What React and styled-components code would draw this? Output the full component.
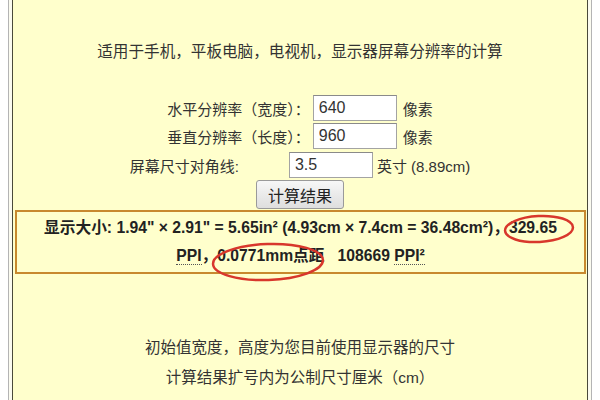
import React from "react";
import styled, { createGlobalStyle } from "styled-components";

const Global = createGlobalStyle`
  html, body { margin: 0; padding: 0; background: #ffffff; }
  body { font-family: "Liberation Sans", "Noto Sans CJK SC", sans-serif; }
  * { box-sizing: border-box; }
`;

const Root = styled.div`
  position: relative;
  width: 600px;
  height: 400px;
  overflow: hidden;
  padding: 0 8px;
`;

const Frame = styled.div`
  height: 100%;
  border-left: 1px solid #b4b4b4;
  border-right: 1px solid #b4b4b4;
  padding: 0 3px;
  background: #fbfbf0;
`;

const Panel = styled.div`
  height: 100%;
  border-left: 1px solid #4a4a3a;
  border-right: 1px solid #4a4a3a;
  background: #ffffcc;
  display: flex;
  flex-direction: column;
  align-items: stretch;
  color: #333;
`;

const Title = styled.div`
  margin-top: 40px;
  height: 24px;
  line-height: 24px;
  text-align: center;
  font-size: 15.6px;
`;

const Form = styled.div`
  margin-top: 31px;
  display: flex;
  flex-direction: column;
  align-items: center;
`;

const Line = styled.div`
  display: flex;
  align-items: center;
  justify-content: center;
  height: 26px;
  margin-top: ${(p) => p.$top || 0}px;
  font-size: 15px;
`;

const Label = styled.span`
  margin-right: ${(p) => p.$gap || 3}px;
  white-space: nowrap;
`;

const Unit = styled.span`
  margin-left: ${(p) => p.$gap || 6}px;
  white-space: nowrap;
`;

const Field = styled.input`
  width: 84px;
  height: 26px;
  border: 1px solid #a3a3a3;
  border-top-color: #8a8a8a;
  background: #fff;
  font-family: "Liberation Sans", sans-serif;
  font-size: 16px;
  color: #333;
  padding: 0 5px;
  margin: 0;
  outline: none;
`;

const Button = styled.button`
  margin-top: 2px;
  width: 88px;
  height: 29px;
  border: 1px solid #9a9a9a;
  border-radius: 3px;
  background: linear-gradient(#f7f7f7, #dedede);
  font-family: "Liberation Sans", "Noto Sans CJK SC", sans-serif;
  font-size: 16px;
  color: #222;
  padding: 0;
`;

const Result = styled.div`
  margin: 1px 1px 0 2px;
  border: 2px solid #c8892e;
  padding: 2px 0;
  text-align: center;
  font-weight: bold;
  font-size: 15.7px;
  color: #222;
`;

const ResultLine = styled.div`
  height: 28px;
  line-height: 28px;
  white-space: nowrap;
`;

const Abbr = styled.abbr`
  text-decoration: none;
  border-bottom: 1px dotted #555;
`;

const Notes = styled.div`
  margin-top: 59px;
  display: flex;
  flex-direction: column;
  align-items: center;
  font-size: 15.5px;
`;

const Note = styled.div`
  height: 30px;
  line-height: 30px;
`;

const Overlay = styled.svg`
  position: absolute;
  left: 0;
  top: 0;
  pointer-events: none;
`;

export default function App() {
  return (
    <>
      <Global />
      <Root>
        <Frame>
          <Panel>
            <Title>适用于手机，平板电脑，电视机，显示器屏幕分辨率的计算</Title>
            <Form>
              <Line>
                <Label>水平分辨率（宽度）：</Label>
                <Field defaultValue="640" />
                <Unit>像素</Unit>
              </Line>
              <Line $top={2}>
                <Label>垂直分辨率（长度）：</Label>
                <Field defaultValue="960" />
                <Unit>像素</Unit>
              </Line>
              <Line $top={3}>
                <Label $gap={50}>屏幕尺寸对角线:</Label>
                <Field defaultValue="3.5" />
                <Unit $gap={4}>英寸 (8.89cm)</Unit>
              </Line>
              <Button>计算结果</Button>
            </Form>
            <Result>
              <ResultLine>
                显示大小: 1.94" × 2.91" = 5.65in² (4.93cm × 7.4cm = 36.48cm²)，329.65
              </ResultLine>
              <ResultLine>
                <Abbr>PPI</Abbr>，0.0771mm点距&nbsp;&nbsp; 108669 <Abbr>PPI²</Abbr>
              </ResultLine>
            </Result>
            <Notes>
              <Note>初始值宽度，高度为您目前使用显示器的尺寸</Note>
              <Note>计算结果扩号内为公制尺寸厘米（cm）</Note>
            </Notes>
          </Panel>
        </Frame>
        <Overlay width="600" height="400" viewBox="0 0 600 400">
          <ellipse cx="539" cy="229" rx="34" ry="13" fill="none" stroke="#d8372c" strokeWidth="2.5" transform="rotate(-3 539 229)" />
          <ellipse cx="268" cy="262" rx="55" ry="18" fill="none" stroke="#d8372c" strokeWidth="2.5" transform="rotate(-2 268 262)" />
        </Overlay>
      </Root>
    </>
  );
}
